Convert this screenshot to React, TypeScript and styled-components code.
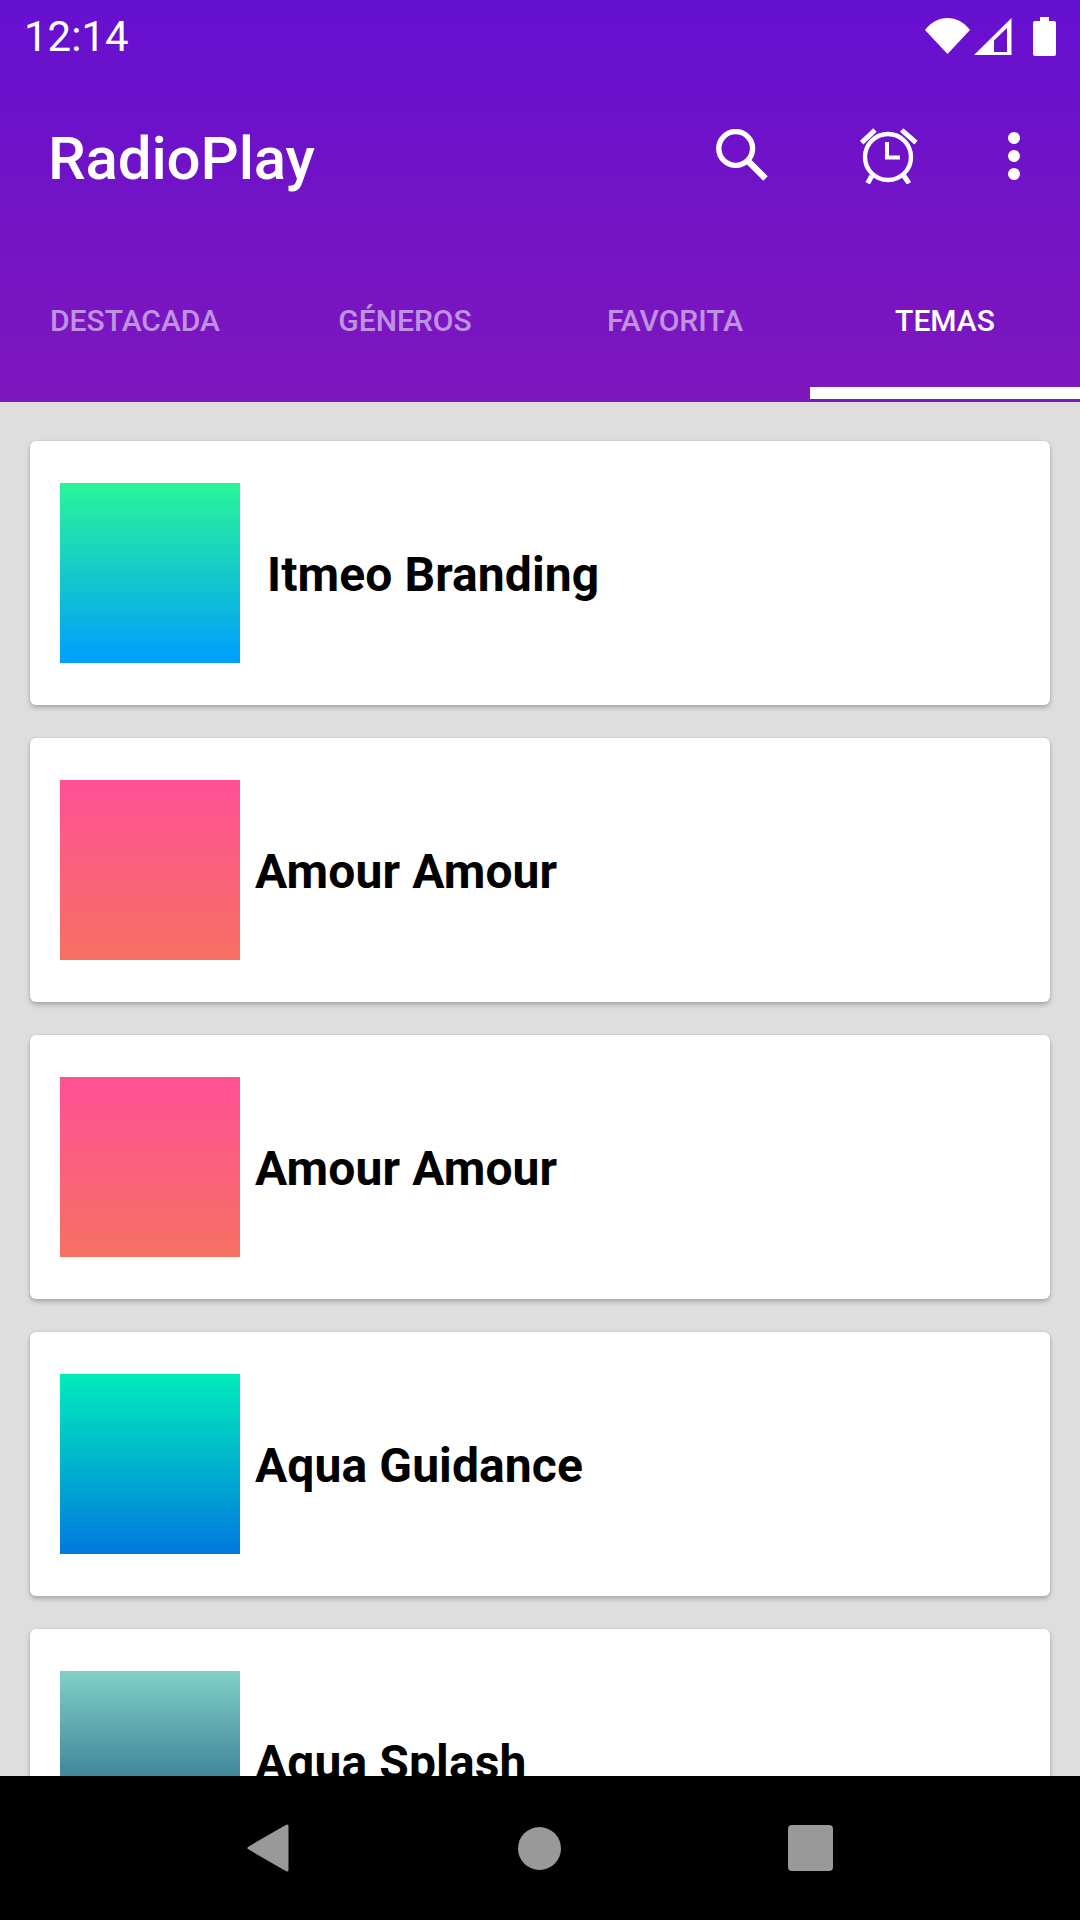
import React, { FC } from 'react';
import styled, { createGlobalStyle } from 'styled-components';

const GlobalStyle = createGlobalStyle`
	html, body {
		margin: 0;
		padding: 0;
		background: #dedede;
	}
`;

const Screen = styled.div`
	width: 1080px;
	height: 1920px;
	display: flex;
	flex-direction: column;
	overflow: hidden;
	font-family: 'Roboto', sans-serif;
`;

const Header = styled.header`
	flex-shrink: 0;
	height: 402px;
	display: flex;
	flex-direction: column;
	background: linear-gradient(180deg, #6610d0 0%, #7e17bd 100%);
	color: #ffffff;
`;

const StatusBar = styled.div`
	height: 72px;
	display: flex;
	align-items: center;
	justify-content: space-between;
	padding: 0 24px;
`;

const Clock = styled.span`
	font-size: 42px;
	line-height: 1;
	margin-top: 2px;
`;

const StatusIcons = styled.div`
	display: flex;
	align-items: center;
	gap: 4px;
`;

const BatteryIcon = styled.svg`
	margin-left: 17px;
`;

const Toolbar = styled.div`
	height: 168px;
	display: flex;
	align-items: center;
	justify-content: space-between;
	padding: 0 60px 0 48px;
`;

const Title = styled.h1`
	margin: 4px 0 0;
	font-size: 60px;
	font-weight: 500;
	letter-spacing: -0.15px;
`;

const Actions = styled.div`
	display: flex;
	align-items: center;
	gap: 90px;
`;

const Tabs = styled.nav`
	height: 159px;
	display: flex;
`;

const Tab = styled.div<{ $active?: boolean }>`
	flex: 1;
	display: flex;
	align-items: center;
	justify-content: center;
	box-sizing: border-box;
	padding-top: 14px;
	font-size: 30px;
	font-weight: 500;
	color: ${({ $active }) => ($active ? '#ffffff' : 'rgba(255, 255, 255, 0.55)')};
	border-bottom: 12px solid ${({ $active }) => ($active ? '#ffffff' : 'transparent')};
`;

const List = styled.main`
	flex: 1;
	min-height: 0;
	overflow: hidden;
	display: flex;
	flex-direction: column;
	gap: 33px;
	padding: 39px 30px 0;
	background: #dedede;
`;

const Card = styled.div`
	flex-shrink: 0;
	height: 264px;
	box-sizing: border-box;
	display: flex;
	align-items: center;
	padding: 0 30px;
	background: #ffffff;
	border-radius: 6px;
	box-shadow: 0 3px 5px rgba(0, 0, 0, 0.22), 0 0 3px rgba(0, 0, 0, 0.1);
`;

const Thumb = styled.div<{ $from: string; $to: string }>`
	width: 180px;
	height: 180px;
	flex-shrink: 0;
	background: linear-gradient(180deg, ${({ $from }) => $from}, ${({ $to }) => $to});
`;

const CardTitle = styled.span<{ $indent: number }>`
	margin: 3px 0 0 ${({ $indent }) => $indent}px;
	font-size: 48px;
	font-weight: 700;
	letter-spacing: 0.1px;
	color: #000000;
`;

const NavBar = styled.footer`
	flex-shrink: 0;
	height: 144px;
	display: flex;
	align-items: center;
	justify-content: center;
	gap: 229px;
	background: #000000;
`;

const HomeButton = styled.div`
	width: 43px;
	height: 43px;
	border-radius: 50%;
	background: #999999;
`;

const RecentsButton = styled.div`
	width: 45px;
	height: 46px;
	margin-left: -2px;
	border-radius: 4px;
	background: #999999;
`;

const themes = [
	{ name: 'Itmeo Branding', from: '#2af598', to: '#009efd', indent: 27 },
	{ name: 'Amour Amour', from: '#fe5196', to: '#f77062', indent: 15 },
	{ name: 'Amour Amour', from: '#fe5196', to: '#f77062', indent: 15 },
	{ name: 'Aqua Guidance', from: '#00ecbc', to: '#007adf', indent: 15 },
	{ name: 'Aqua Splash', from: '#80d0c7', to: '#13547a', indent: 15 },
];

const tabs = ['DESTACADA', 'GÉNEROS', 'FAVORITA', 'TEMAS'];

const App: FC = () => (
	<Screen>
		<GlobalStyle />
		<Header>
			<StatusBar>
				<Clock>12:14</Clock>
				<StatusIcons>
					<svg width="45" height="36" viewBox="0 0 45 36">
						<path fill="#fff" d="M22.5 36 L0 12 C6 4 14 0 22.5 0 C31 0 39 4 45 12 Z" />
					</svg>
					<svg width="38" height="37" viewBox="0 0 38 37">
						<path fill="#fff" fillRule="evenodd" d="M0 37 L37.5 0 V37 Z M20 34 H33 V10 L20 22.5 Z" />
					</svg>
					<BatteryIcon width="23" height="39" viewBox="0 0 23 39">
						<path fill="#fff" d="M7 0 H16 V4 H21 Q23 4 23 6 V37 Q23 39 21 39 H2 Q0 39 0 37 V6 Q0 4 2 4 H7 Z" />
					</BatteryIcon>
				</StatusIcons>
			</StatusBar>
			<Toolbar>
				<Title>RadioPlay</Title>
				<Actions>
					<svg width="54" height="54" viewBox="0 0 54 54" fill="none" stroke="#fff">
						<circle cx="19.7" cy="19.5" r="16.9" strokeWidth="5.4" />
						<path d="M32 32 L49.5 49.5" strokeWidth="6.4" />
					</svg>
					<svg width="58" height="56" viewBox="0 0 58 56" fill="none" stroke="#fff">
						<circle cx="28" cy="29" r="23" strokeWidth="4.4" />
						<path d="M27 14 V29.5 H40" strokeWidth="4" />
						<path d="M1.7 14.7 L15 2 M41.7 2 L56 14.7 M11.7 48 L7.7 55.3 M44 48 L49 55.3" strokeWidth="5" />
					</svg>
					<svg width="12" height="48" viewBox="0 0 12 48" fill="#fff">
						<circle cx="6" cy="6" r="6" />
						<circle cx="6" cy="24" r="6" />
						<circle cx="6" cy="42" r="6" />
					</svg>
				</Actions>
			</Toolbar>
			<Tabs>
				{tabs.map((tab, i) => (
					<Tab key={tab} $active={i === tabs.length - 1}>{tab}</Tab>
				))}
			</Tabs>
		</Header>
		<List>
			{themes.map((theme, i) => (
				<Card key={i}>
					<Thumb $from={theme.from} $to={theme.to} />
					<CardTitle $indent={theme.indent}>{theme.name}</CardTitle>
				</Card>
			))}
		</List>
		<NavBar>
			<svg width="42" height="48" viewBox="0 0 42 48">
				<path fill="#999" stroke="#999" strokeWidth="3" strokeLinejoin="round" d="M40 2 V46 L2 24 Z" />
			</svg>
			<HomeButton />
			<RecentsButton />
		</NavBar>
	</Screen>
);

export default App;
